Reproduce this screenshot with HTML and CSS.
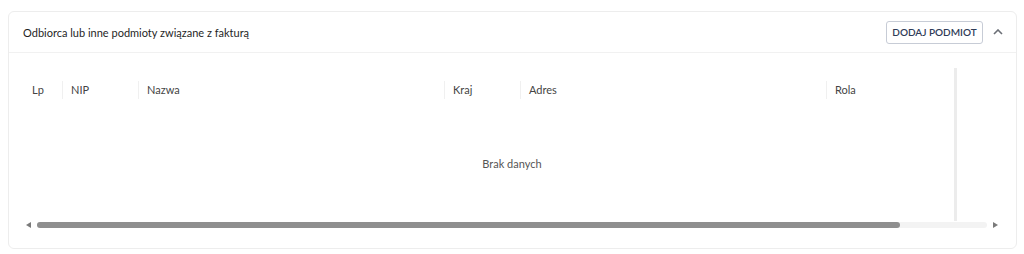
FILE: index.html
```html
<!DOCTYPE html>
<html lang="pl">
<head>
<meta charset="utf-8">
<link rel="stylesheet" href="styles.css">
</head>
<body>
<section class="card">
  <header class="card-head">
    <span class="title">Odbiorca lub inne podmioty związane z fakturą</span>
    <div class="actions">
      <button class="btn">DODAJ PODMIOT</button>
      <svg class="chev" width="10" height="6" viewBox="0 0 10 6"><path d="M1 5 L5 1 L9 5" fill="none" stroke="#6b6f76" stroke-width="1.6"/></svg>
    </div>
  </header>
  <div class="card-body">
    <div class="table-wrap">
      <div class="thead">
        <div class="th c-lp">Lp</div>
        <div class="th c-nip">NIP</div>
        <div class="th c-nazwa">Nazwa</div>
        <div class="th c-kraj">Kraj</div>
        <div class="th c-adres">Adres</div>
        <div class="th c-rola">Rola</div>
      </div>
      <div class="empty">Brak danych</div>
      <div class="vbar"></div>
    </div>
    <div class="hscroll">
      <span class="arrow left"></span>
      <div class="track"><div class="thumb"></div></div>
      <span class="arrow right"></span>
    </div>
  </div>
</section>
</body>
</html>
```
FILE: styles.css
```css
* { box-sizing: border-box; }
html, body { margin: 0; padding: 0; background: #fff; }
body {
  font-family: "Lato", "Open Sans", sans-serif;
  color: #222;
  padding: 11px 7px 0 8px;
}
.card {
  border: 1px solid #ededed;
  border-radius: 6px;
  height: 238px;
  display: flex;
  flex-direction: column;
}
.card-head {
  height: 41px;
  display: flex;
  align-items: center;
  justify-content: space-between;
  padding: 0 13px 0 14px;
  border-bottom: 1px solid #f1f1f1;
}
.title {
  font-size: 11px;
  color: #1f1f1f;
}
.actions {
  display: flex;
  align-items: center;
  gap: 10px;
}
.btn {
  font-family: inherit;
  font-size: 10px;
  font-weight: 600;
  color: #2e3b57;
  background: #fff;
  border: 1px solid #c7ccd6;
  border-radius: 3px;
  height: 23px;
  width: 97px;
  padding: 0;
}
.chev { display: block; }
.card-body {
  flex: 1;
  padding: 15px 15px 0 14px;
  display: flex;
  flex-direction: column;
}
.table-wrap {
  position: relative;
  height: 153px;
}
.thead {
  display: grid;
  grid-template-columns: 39px 76px 306px 76px 306px 129px;
  padding-top: 13px;
}
.th {
  font-size: 11px;
  color: #444;
  padding-left: 8px;
  height: 18px;
  line-height: 18px;
  border-left: 1px solid #f0f0f0;
}
.th.c-lp { border-left-color: transparent; }
.empty {
  text-align: center;
  font-size: 11px;
  color: #555;
  margin-top: 58px;
}
.vbar {
  position: absolute;
  left: 931px;
  top: 0;
  width: 3px;
  height: 100%;
  background: #ececec;
}
.hscroll {
  display: flex;
  align-items: center;
  height: 8px;
  gap: 6px;
  padding-left: 3px;
  width: 975px;
}
.arrow {
  width: 0; height: 0;
  border-top: 3.5px solid transparent;
  border-bottom: 3.5px solid transparent;
}
.arrow.left { border-right: 5px solid #7a7a7a; }
.arrow.right { border-left: 5px solid #7a7a7a; }
.track {
  flex: 1;
  height: 6px;
  background: #f3f3f3;
  border-radius: 3px;
}
.thumb {
  width: 863px;
  height: 6px;
  background: #8f8f8f;
  border-radius: 3px;
}
```
